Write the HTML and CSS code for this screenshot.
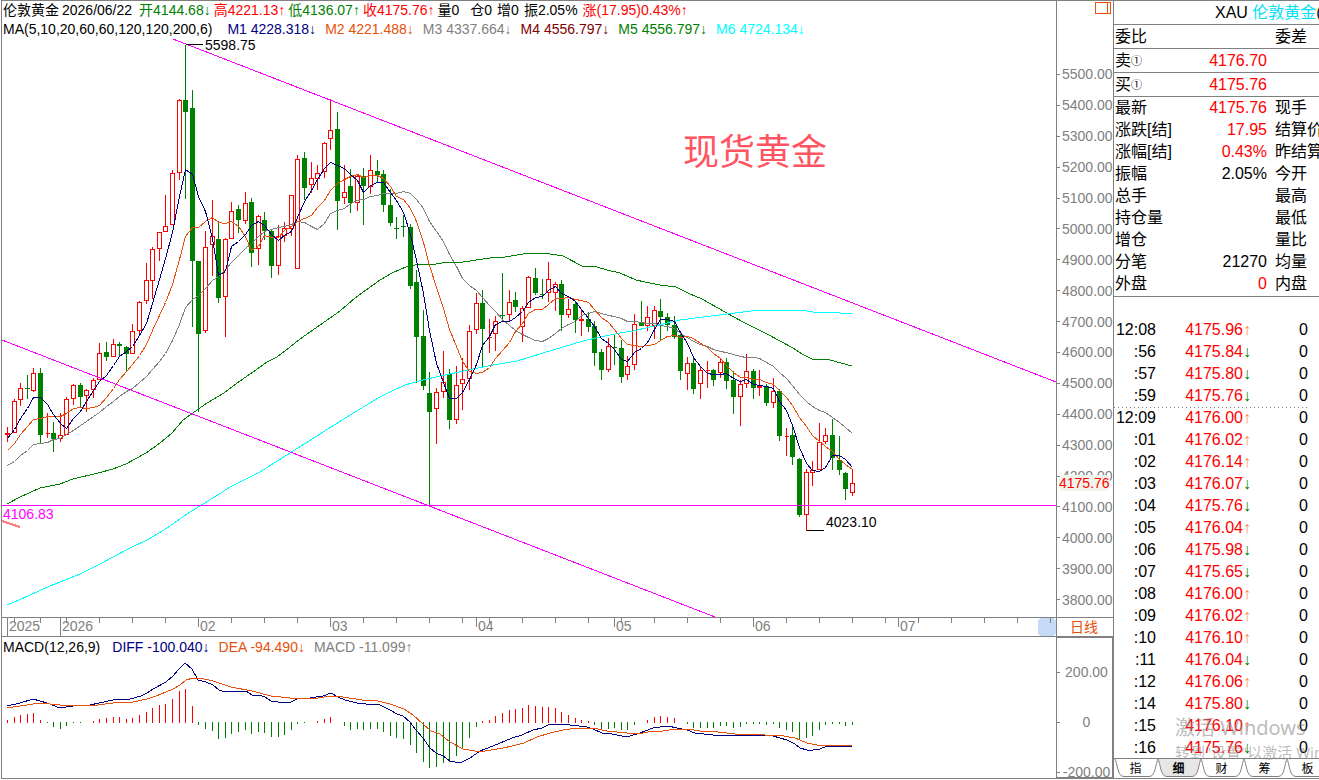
FILE: index.html
```html
<!DOCTYPE html>
<html lang="zh">
<head>
    <meta charset="UTF-8">
    <title>伦敦黄金 日线</title>
    <link rel="stylesheet" href="styles.css">
</head>
<body>
    <main class="terminal">
        <!-- 图表区 -->
        <section class="chart-area">
            <div class="price-pane">
                <svg class="plot" id="priceChart" viewBox="2 1 1054 616" preserveAspectRatio="none"></svg>
                <div class="info-row">
                    <span>伦敦黄金</span>
                    <span class="date">2026/06/22</span>
                    <span class="green">开4144.68↓</span>
                    <span class="red">高4221.13↑</span>
                    <span class="green">低4136.07↑</span>
                    <span class="red">收4175.76↑</span>
                    <span class="volume">量0</span>
                    <span class="stat">仓0</span>
                    <span class="stat">增0</span>
                    <span class="stat">振2.05%</span>
                    <span class="red">涨(17.95)0.43%↑</span>
                </div>
                <div class="info-row ma-row">
                    <span class="name">MA(5,10,20,60,60,120,120,200,6)</span>
                    <span class="navy">M1 4228.318↓</span>
                    <span class="orange">M2 4221.488↓</span>
                    <span class="gray">M3 4337.664↓</span>
                    <span class="maroon">M4 4556.797↓</span>
                    <span class="green">M5 4556.797↓</span>
                    <span class="cyan">M6 4724.134↓</span>
                </div>
                <span class="mark mark-high">5598.75</span>
                <span class="mark mark-low">4023.10</span>
                <span class="mark mark-line">4106.83</span>
                <h1 class="mark mark-title">现货黄金</h1>
            </div>
            <div class="price-axis">
                <button class="layout-btn" type="button" aria-label="布局">
                    <svg width="17" height="13" viewBox="0 0 17 13"><path d="M.5.5h15v11H.5zM12.5.5v11"/></svg>
                </button>
                <ul class="axis-labels" id="priceLabels"></ul>
                <span class="last-price">4175.76</span>
            </div>

            <div class="time-axis">
                <svg class="plot" id="timeTicks" viewBox="2 618 1054 18" preserveAspectRatio="none"></svg>
                <span class="month" style="left: 7px">2025</span>
                <span class="month" style="left: 60px">2026</span>
                <span class="month" style="left: 198px">02</span>
                <span class="month" style="left: 330px">03</span>
                <span class="month" style="left: 476px">04</span>
                <span class="month" style="left: 614px">05</span>
                <span class="month" style="left: 753px">06</span>
                <span class="month" style="left: 898px">07</span>
            </div>
            <button class="period" type="button">日线</button>

            <div class="macd-pane">
                <svg class="plot" id="macdChart" viewBox="2 637 1054 141" preserveAspectRatio="none"></svg>
                <div class="info-row macd-row">
                    <span class="name">MACD(12,26,9)</span>
                    <span class="navy">DIFF -100.040↓</span>
                    <span class="orange">DEA -94.490↓</span>
                    <span class="gray">MACD -11.099↑</span>
                </div>
            </div>
            <ul class="macd-axis">
                <li>200.00</li>
                <li>0</li>
                <li>-200.00</li>
            </ul>
        </section>

        <!-- 报价区 -->
        <aside class="quote">
            <h2 class="quote-title">XAU <span>伦敦黄金</span>(</h2>
            <table class="quote-table">
                <tbody class="lined">
                    <tr><th>委比</th><td></td><th>委差</th></tr>
                    <tr><th>卖<small>①</small></th><td class="red">4176.70</td><th></th></tr>
                    <tr><th>买<small>①</small></th><td class="red">4175.76</td><th></th></tr>
                </tbody>
                <tbody>
                    <tr><th>最新</th><td class="red">4175.76</td><th>现手</th></tr>
                    <tr><th>涨跌[结]</th><td class="red">17.95</td><th>结算价</th></tr>
                    <tr><th>涨幅[结]</th><td class="red">0.43%</td><th>昨结算</th></tr>
                    <tr><th>振幅</th><td>2.05%</td><th>今开</th></tr>
                    <tr><th>总手</th><td></td><th>最高</th></tr>
                    <tr><th>持仓量</th><td></td><th>最低</th></tr>
                    <tr><th>增仓</th><td></td><th>量比</th></tr>
                    <tr><th>分笔</th><td>21270</td><th>均量</th></tr>
                    <tr><th>外盘</th><td class="red">0</td><th>内盘</th></tr>
                </tbody>
            </table>
            <div class="trades">
                <table class="trade-table"><tbody id="tradeRows"></tbody></table>
            </div>
            <nav class="tabs" id="tabs"></nav>
            <div class="watermark">
                <p class="big">激活 Windows</p>
                <p>转到"设置"以激活 Windows。</p>
            </div>
        </aside>
    </main>
    <script src="chart.js"></script>
</body>
</html>
```
FILE: styles.css
```css
/* 基础样式 */
* {
    margin: 0;
    padding: 0;
    box-sizing: border-box;
}

body {
    background: #fff;
    color: #000;
    font-family: 'Liberation Sans', 'Noto Sans CJK SC', sans-serif;
    font-size: 14px;
    height: 100vh;
    padding: 0 0 1px 1px;
    overflow: hidden;
}

ul {
    list-style: none;
}

button {
    border: none;
    background: none;
    font-family: inherit;
    cursor: pointer;
}

.terminal {
    display: flex;
    height: 100%;
    border: 1px solid #808080;
    border-right: none;
}

/* 颜色 */
.red { color: #f00; }
.green { color: #008000; }
.navy { color: #000080; }
.orange { color: #e6500a; }
.gray { color: #808080; }
.maroon { color: #800000; }
.cyan { color: #0ff; }

/* 图表区 */
.chart-area {
    flex: 1;
    min-width: 0;
    display: grid;
    grid-template-columns: 1fr 58px;
    grid-template-rows: 1fr 20px 141px;
}

.price-pane,
.macd-pane,
.time-axis {
    position: relative;
    min-width: 0;
    overflow: hidden;
}

.plot {
    position: absolute;
    top: 0;
    left: 0;
    width: 100%;
    height: 100%;
    fill: none;
    shape-rendering: crispEdges;
}

.info-row {
    position: relative;
    display: flex;
    gap: 3px;
    padding-left: 1px;
    line-height: 19px;
    white-space: nowrap;
}

.info-row .date {
    padding-right: 4px;
}

.info-row .volume {
    padding-right: 8px;
}

.info-row .stat {
    padding-right: 2px;
}

.info-row.ma-row {
    gap: 9px;
}

.ma-row .name {
    padding-right: 6px;
}

.info-row.macd-row {
    gap: 9px;
    line-height: 20px;
}

.macd-row .name {
    padding-right: 3px;
}

/* 画在图上的标注 */
.mark {
    position: absolute;
    line-height: 16px;
}

.mark-high { left: 203px; top: 36px; }
.mark-low { left: 824px; top: 513px; }
.mark-line { left: 1px; top: 505px; color: #f0f; }

.mark-title {
    left: 681px;
    top: 132px;
    line-height: 40px;
    font-size: 36px;
    font-weight: normal;
    color: #ff5562;
}

/* 价格坐标 */
.price-axis {
    position: relative;
    border: solid #808080;
    border-width: 0 1px;
    color: #808080;
}

.layout-btn {
    position: absolute;
    top: 1px;
    right: 1px;
    line-height: 0;
}

.layout-btn svg {
    fill: none;
    stroke: #e6500a;
    shape-rendering: crispEdges;
}

.axis-labels {
    display: flex;
    flex-direction: column;
    height: 100%;
    padding: 58px 0 2px;
}

.axis-labels li {
    flex: 1;
    display: flex;
    align-items: center;
    gap: 2px;
}

.axis-labels li::before {
    content: '';
    width: 3px;
    height: 1px;
    background: #808080;
}

.last-price {
    position: absolute;
    left: 2px;
    top: 474px;
    border-radius: 5px;
    background: #f0f5ec;
    line-height: 16px;
    color: #f00;
}

/* 时间坐标 */
.time-axis,
.period {
    border: solid #808080;
    border-width: 1px 0;
}

.time-axis {
    color: #808080;
}

.month {
    position: absolute;
    line-height: 17px;
}

.period {
    padding-right: 2px;
    border-width: 1px;
    font-size: 14px;
    line-height: 18px;
    color: #e6500a;
}

.macd-axis {
    display: flex;
    flex-direction: column;
    padding-top: 9px;
    border: 2px solid #808080;
    border-width: 1px 2px 1px 1px;
    color: #808080;
    text-align: center;
    line-height: 50px;
}

.macd-axis li {
    position: relative;
    height: 50px;
    padding-left: 4px;
}

.macd-axis li::before {
    content: '';
    position: absolute;
    left: 0;
    top: 25px;
    width: 3px;
    height: 1px;
    background: #808080;
}

.macd-axis li:last-child {
    height: 29px;
}

/* 报价区 */
.quote {
    position: relative;
    display: flex;
    flex-direction: column;
    width: 205px;
    overflow: hidden;
    font-size: 16px;
    white-space: nowrap;
}

.quote-title {
    padding-left: 101px;
    border-bottom: 1px solid #808080;
    font-size: 16px;
    font-weight: normal;
    line-height: 23px;
}

.quote-title span {
    color: #00e1f5;
}

.quote-table {
    table-layout: fixed;
    width: 100%;
    padding-bottom: 1px;
    border-spacing: 0;
    border-bottom: 1px solid #808080;
}

.quote-table th,
.quote-table td {
    height: 22px;
    font-weight: normal;
    line-height: 20px;
}

.quote-table th {
    padding-left: 1px;
    text-align: left;
}

.quote-table th:first-child {
    width: 70px;
}

.quote-table th:last-child {
    width: 52px;
    padding-left: 8px;
}

.quote-table td {
    text-align: right;
}

.quote-table small {
    font-size: 11px;
    line-height: 12px;
    vertical-align: 1px;
}

.quote-table .lined th,
.quote-table .lined td {
    height: 24px;
    border-bottom: 1px solid #808080;
}

.trades {
    flex: 1;
    min-height: 0;
    padding-top: 22px;
    overflow: hidden;
}

.trade-table {
    width: 194px;
    border-collapse: collapse;
    line-height: 22px;
    text-align: right;
}

.trade-table td {
    height: 22px;
}

.trade-table .time { width: 42px; }
.trade-table .price { width: 95px; }
.trade-table .up { color: #ff8c46; }
.trade-table .down { color: #008000; }

.trade-table .minute {
    background: repeating-linear-gradient(90deg, #808080 0 1px, transparent 1px 4px) 0 0 / 100% 1px no-repeat;
}

.tabs {
    display: flex;
    height: 20px;
    border-top: 1px solid #808080;
}

.tab {
    position: relative;
    flex: none;
    width: 43px;
    font-size: 12px;
    line-height: 18px;
}

.tab svg {
    position: absolute;
    top: 0;
    left: 0;
    fill: #fff;
    stroke: #808080;
}

.tab span {
    position: relative;
}

.tab.active {
    z-index: 1;
    font-weight: bold;
}

.tab.active svg {
    fill: #e6e6e6;
}

.watermark {
    position: absolute;
    left: 61px;
    bottom: 15px;
    font-family: 'Noto Sans', 'Noto Sans CJK SC', sans-serif;
    font-size: 15px;
    line-height: 22px;
    color: rgba(130, 130, 130, 0.55);
    pointer-events: none;
}

.watermark .big {
    font-size: 20px;
    line-height: 26px;
}
```
FILE: chart.js
```js
const NS = 'http://www.w3.org/2000/svg';

// r 阳线 / g 阴线, 最高, 实体上沿, 实体下沿, 最低
const candles = `
r427,433,434,441 r399,401,432,432 r383,388,399,405 g375,388,389,399 r368,373,390,391 g368,373,435,443
r413,433,433,437 g422,433,439,452 r413,435,438,441 r397,399,434,434 r384,385,398,404 g383,385,397,407
r389,390,395,411 r378,380,389,397 r343,353,379,379 g342,352,357,361 r339,344,356,356 g342,344,346,357
g346,347,354,371 r324,331,353,353 r301,302,330,333 r263,280,300,303 r247,249,280,298 r232,232,248,260
r195,226,231,231 r170,173,224,224 r99,100,172,179 g45,100,112,199 g90,108,261,327 g261,261,334,412
r231,247,330,332 r200,236,244,275 g221,239,298,303 r238,239,296,336 r202,211,238,238 g205,209,220,233
r192,203,220,223 g198,202,253,267 r215,216,248,264 g212,220,231,240 g230,231,266,278 r225,236,265,274
r222,228,235,241 r195,195,228,235 r155,159,268,268 g152,158,188,200 r162,178,184,192 r165,173,178,189
r142,143,171,177 r99,130,138,149 g112,129,201,230 r165,192,197,203 g169,186,203,213 r174,176,202,210
g168,176,186,225 r155,170,186,193 g160,171,175,182 g170,174,205,212 g189,205,223,226 g217,228,229,239
g215,226,227,237 g224,227,286,289 g270,282,337,383 g310,336,386,390 g372,393,412,506 r388,392,408,443
r351,382,391,397 g369,374,420,429 r366,385,419,423 r358,379,383,409 r325,331,378,389 r293,303,329,333
g290,303,329,367 r319,337,337,352 r316,321,333,350 g273,315,316,321 r290,302,314,321 g292,300,307,312
r306,308,326,341 r276,277,307,307 g268,278,293,295 g279,294,295,299 r262,279,292,301 r282,284,292,310
g280,284,315,331 r299,309,314,317 g302,304,320,333 r309,319,320,335 g312,319,327,332 g321,326,353,366
g349,352,370,380 r338,346,369,371 g335,347,348,365 g340,348,377,383 r356,366,374,379 r314,324,364,369
g301,323,326,326 r306,317,325,330 r306,310,325,338 g299,311,317,340 g313,317,325,331 g316,325,337,339
g333,335,371,380 r357,363,373,389 g356,363,389,394 r366,370,383,398 r361,370,370,387 g369,370,380,386
r358,362,372,377 g358,362,381,389 g371,380,397,414 r380,384,396,425 r354,371,383,387 g369,371,388,399
r370,386,387,395 g384,386,403,406 r378,391,402,407 g389,391,436,441 r428,436,436,455 g426,435,457,465
g458,459,515,517 r469,472,514,530 r461,470,472,485 r423,442,469,469 r428,435,441,443 g419,435,458,470
g436,460,470,475 g472,473,489,500 r469,483,492,495`.trim().split(/\s+/).map(s => {
    const [high, top, bottom, low] = s.slice(1).split(',').map(Number);
    return { up: s[0] === 'r', high, top, bottom, low };
});

const xAt = i => Math.floor(7.5 + 6.6 * i);

function draw(svg, tag, attrs) {
    const el = document.createElementNS(NS, tag);
    for (const k in attrs) el.setAttribute(k, attrs[k]);
    svg.appendChild(el);
}

function line(svg, points, color, width = 1) {
    draw(svg, 'polyline', { points, stroke: color, 'stroke-width': width });
}

// 均线, head 为样本不足时的前段
function average(n, head) {
    return candles.map((c, i) => {
        let y = head[i];
        if (i >= head.length) {
            y = candles.slice(i - n + 1, i + 1).reduce((sum, k) => sum + (k.up ? k.top : k.bottom), 0) / n;
        }
        return `${xAt(i) + 0.5},${Math.round(y) + 0.5}`;
    }).join(' ');
}

// K线
const price = document.getElementById('priceChart');
let reds = '', greens = '', bodies = '';
candles.forEach((c, i) => {
    const x = xAt(i);
    if (c.up) {
        reds += `M${x + 0.5} ${c.high}V${c.top}M${x + 0.5} ${c.bottom}V${c.low + 1}`;
        reds += `M${x - 1.5} ${c.top + 0.5}h4V${c.bottom + 0.5}h-4z`;
    } else {
        greens += `M${x + 0.5} ${c.high}V${c.low}`;
        bodies += `M${x - 2} ${c.top}h5V${c.bottom}h-5z`;
    }
});
draw(price, 'path', { d: reds, stroke: '#f00' });
draw(price, 'path', { d: greens, stroke: '#008000' });
draw(price, 'path', { d: bodies, fill: '#008000' });

line(price, average(20, [465, 461, 455, 450, 444, 443, 442, 439, 438, 434, 430, 425, 421, 416, 412, 406, 401, 396, 391]), '#808080');
line(price, '7,504 20,497 40,488 60,484 73,479 98,473 113,469 126,464 146,453 160,443 172,433 183,420 207,403 224,393 240,381 253,372 267,362 277,357 290,347 300,339 320,325 340,311 355,298 366,290 380,280 392,273 408,266 423,264 430,265 442,263 463,262 490,258 505,257 523,254 537,253 550,254 563,256 582,266 597,267 607,270 620,273 636,280 645,282 660,285 676,287 690,294 702,299 725,312 743,322 767,334 793,348 802,354 812,359 830,360 852,366', '#008000');
line(price, '7,605 19,600 50,586 80,574 100,564 130,548 149,539 167,528 187,514 200,506 213,498 230,487 260,472 290,453 320,434 350,415 370,403 380,397 392,391 405,385 423,380 440,376 450,374 468,370 493,365 517,361 530,357 553,350 583,341 600,337 620,333 633,331 667,323 680,320 703,317 727,314 743,312 760,310 800,310 813,312 840,313 852,314', '#0ff');
line(price, average(10, [450, 443, 434, 426, 419, 418, 416, 416, 416]), '#e6500a');
line(price, average(5, [438, 429, 418, 408]), '#000080');

// 趋势线
line(price, '173,39 1056,382', '#f0f');
line(price, '2,340 715,617', '#f0f');
line(price, '2,505.5 1056,505.5', '#f0f');
line(price, '2,521 20,527', '#ff8080', 2);
line(price, '186,44.5 203,44.5', '#000');
line(price, '807,530.5 824,530.5', '#000');

// 时间刻度
const ticks = document.getElementById('timeTicks');
draw(ticks, 'rect', { x: 1038, y: 618, width: 18, height: 18, rx: 4, fill: '#c4daf5' });
const minor = [14, 40, 66, 99, 132, 165, 231, 264, 297, 363, 396, 429, 462, 489, 522, 555, 588, 621, 654, 687, 720, 786, 819, 852, 885, 918, 951, 984, 1017, 1050];
let tickPath = 'M7.5 618v18M60.5 618v18';
[198, 330, 476, 614, 753, 898].forEach(x => tickPath += `M${x + 0.5} 618v9`);
minor.forEach(x => tickPath += `M${x + 0.5} 618v5`);
draw(ticks, 'path', { d: tickPath, stroke: '#808080' });

// MACD
const macd = document.getElementById('macdChart');
const bars = [2, 5, 7, 8, 9, 2, -1, -5, -7, -4, -1, -1, 0, 1, 3, 4, 5, 5, 3, 4, 7, 10, 14, 17, 18, 23, 31, 33, 16,
    -3, -7, -9, -17, -16, -12, -10, -8, -12, -10, -11, -15, -15, -13, -8, -2, -1, 0, 1, 3, 5, 0,
    -4, -8, -7, -8, -7, -7, -10, -14, -16, -17, -23, -31, -40, -46, -45, -41, -40, -34, -27, -16, -5,
    1, 2, 6, 9, 12, 13, 14, 17, 16, 15, 15, 14, 10, 7, 4, 2, 1, -3, -7, -7, -6, -8, -8, -3, 0, 2, 5, 6, 5, 4, 0,
    -2, -6, -6, -6, -6, -4, -4, -6, -5, -2, -2, -2, -3, -2, -6, -8, -10, -17, -16, -14, -8, -3, -2, -2, -4, -3];
let upBars = '', downBars = '';
bars.forEach((v, i) => {
    if (v > 0) upBars += `M${xAt(i) + 0.5} 723V${722 - v}`;
    if (v < 0) downBars += `M${xAt(i) + 0.5} 722V${722 - v}`;
});
draw(macd, 'path', { d: upBars, stroke: '#f00' });
draw(macd, 'path', { d: downBars, stroke: '#008000' });
line(macd, '7,706 20,703 33,699 47,703 60,708 73,706 90,705 113,700 130,699 141,696 147,693 153,689 166,682 173,676 179,669 185,663 192,669 198,680 206,682 213,685 219,690 225,692 231,691 238,692 246,691 252,695 259,695 265,697 271,701 278,702 285,703 291,702 297,699 310,698 323,696 331,693 338,697 345,700 357,703 366,704 378,704 384,707 390,710 397,714 403,716 410,722 416,730 423,738 430,748 436,753 443,756 450,761 455,762 462,762 470,758 480,751 493,746 512,738 522,735 533,730 542,728 548,725 555,724 570,725 587,727 593,729 602,733 612,734 622,736 630,736 640,733 653,728 668,726 677,728 687,730 695,733 713,735 737,736 753,735 773,736 787,740 795,744 800,748 807,750 813,750 820,749 827,746 840,746 852,747', '#000080');
line(macd, '7,708 20,706 40,703 50,704 60,705 98,705 113,703 133,702 147,699 156,696 166,692 173,689 180,685 186,680 193,678 200,678 213,681 231,687 252,691 271,696 290,698 318,698 331,696 343,697 362,700 378,701 390,704 404,709 413,715 423,724 431,731 440,734 450,742 463,749 475,751 485,751 503,748 512,746 524,743 537,737 550,733 563,730 578,728 593,728 607,731 627,733 643,733 653,731 663,731 675,729 688,729 700,731 718,732 735,734 755,734 765,735 778,735 795,738 807,743 817,745 852,746', '#e6500a');

// 价格坐标
let labels = '';
for (let p = 5500; p >= 3800; p -= 100) labels += `<li>${p}.00</li>`;
document.getElementById('priceLabels').innerHTML = labels;

// 逐笔成交
const trades = [
    ['12:08', '4175.96', 1], [':56', '4175.84', 0], [':57', '4175.80', 0], [':59', '4175.76', 0],
    ['12:09', '4176.00', 1], [':01', '4176.02', 1], [':02', '4176.14', 1], [':03', '4176.07', 0],
    [':04', '4175.76', 0], [':05', '4176.04', 1], [':06', '4175.98', 0], [':07', '4175.65', 0],
    [':08', '4176.00', 1], [':09', '4176.02', 1], [':10', '4176.10', 1], [':11', '4176.04', 0],
    [':12', '4176.06', 1], [':14', '4175.80', 0], [':15', '4176.10', 1], [':16', '4175.76', 0]
];
document.getElementById('tradeRows').innerHTML = trades.map(([time, value, up], i) => `
    <tr${i && time.length === 5 ? ' class="minute"' : ''}>
        <td class="time">${time}</td>
        <td class="price red">${value}<span class="${up ? 'up' : 'down'}">${up ? '↑' : '↓'}</span></td>
        <td>0</td>
    </tr>`).join('');

// 底部标签
document.getElementById('tabs').innerHTML = ['指', '细', '财', '筹', '板'].map(t => `
    <button type="button" class="tab${t === '细' ? ' active' : ''}">
        <svg width="46" height="19" viewBox="0 0 46 19"><path d="M.5-1C4 5 3 17.500 10 17.500H35C42 17.500 41 5 44.500-1"/></svg>
        <span>${t}</span>
    </button>`).join('');
```
